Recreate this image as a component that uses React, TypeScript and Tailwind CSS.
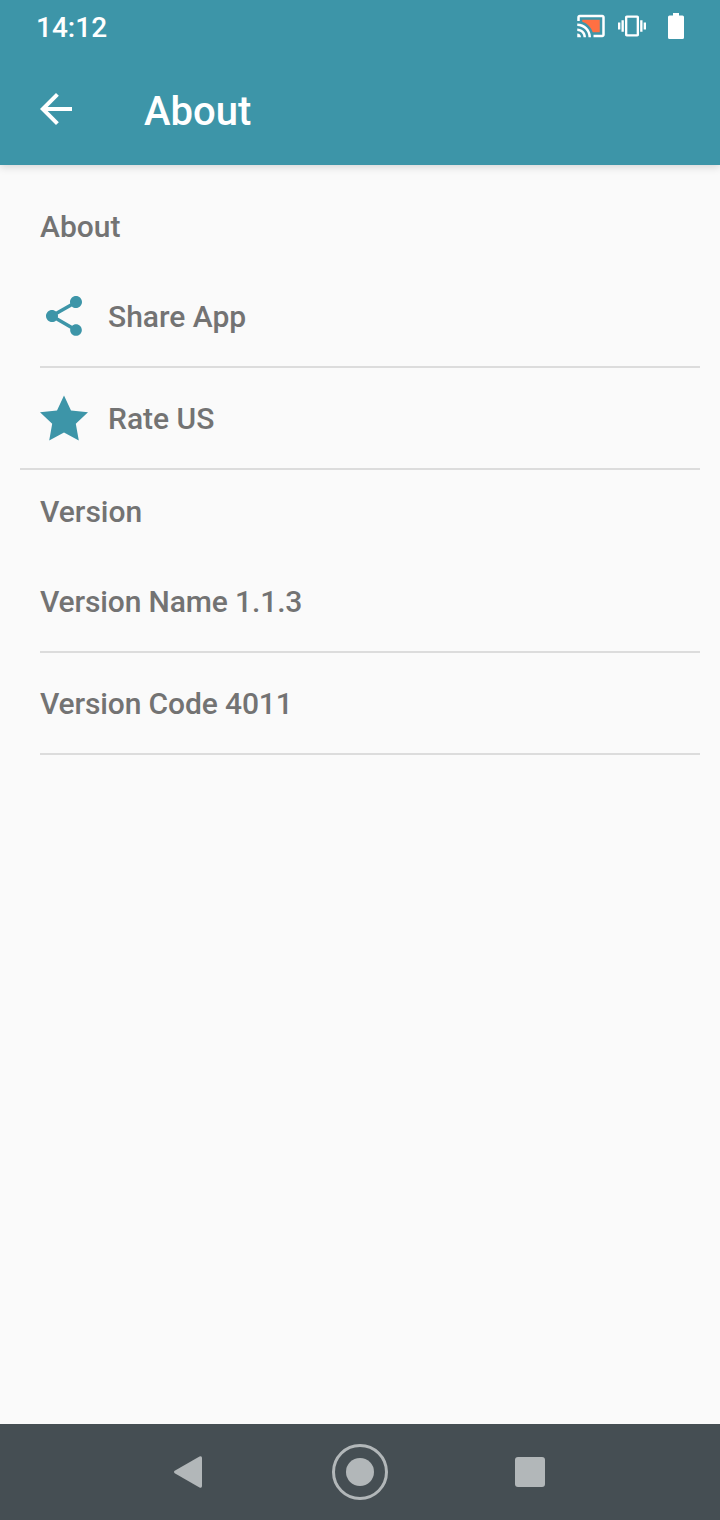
import { ReactNode } from "react"

function StatusBar() {
  return (
    <div className="flex h-[53px] items-center justify-between pl-9 pr-9 text-white">
      <span className="text-[28px] font-medium leading-none mt-[2px]">14:12</span>
      <div className="mb-[2px] flex items-center">
        <svg className="mr-3 h-[30px] w-[30px]" viewBox="0 0 24 24">
          <path fill="#ff7043" d="M19 7H5v1.63c3.96 1.28 7.09 4.41 8.37 8.37H19V7z" />
          <path
            fill="currentColor"
            d="M1 18v3h3c0-1.66-1.34-3-3-3zm0-4v2c2.76 0 5 2.24 5 5h2c0-3.87-3.13-7-7-7zm0-4v2c4.97 0 9 4.03 9 9h2c0-6.08-4.93-11-11-11zm20-7H3c-1.1 0-2 .9-2 2v3h2V5h18v14h-7v2h7c1.1 0 2-.9 2-2V5c0-1.1-.9-2-2-2z"
          />
        </svg>
        <svg className="mr-[22px] h-7 w-7" viewBox="0 0 24 24" fill="currentColor">
          <path d="M0 15h2V9H0v6zm3 2h2V7H3v10zm19-8v6h2V9h-2zm-3 8h2V7h-2v10zM16.5 3h-9C6.67 3 6 3.67 6 4.5v15c0 .83.67 1.5 1.5 1.5h9c.83 0 1.5-.67 1.5-1.5v-15c0-.83-.67-1.5-1.5-1.5zM16 19H8V5h8v14z" />
        </svg>
        <svg className="h-[26px] w-4" viewBox="0 0 16 26" fill="currentColor">
          <path d="M5 0h6v2.5h3.5A1.5 1.5 0 0 1 16 4v20.5a1.5 1.5 0 0 1-1.5 1.5h-13A1.5 1.5 0 0 1 0 24.500V4a1.5 1.5 0 0 1 1.5-1.500H5z" />
        </svg>
      </div>
    </div>
  )
}

function ShareIcon() {
  return (
    <svg className="h-12 w-12" viewBox="0 0 24 24" fill="#3d95a8">
      <path d="M18 16.080c-.76 0-1.440.3-1.960.77L8.910 12.700c.05-.23.09-.46.09-.7s-.04-.47-.09-.7l7.050-4.110c.54.5 1.250.81 2.040.81 1.660 0 3-1.340 3-3s-1.340-3-3-3-3 1.340-3 3c0 .24.04.47.09.7L8.040 9.810C7.500 9.310 6.790 9 6 9c-1.660 0-3 1.340-3 3s1.340 3 3 3c.79 0 1.500-.31 2.040-.81l7.120 4.160c-.05.21-.08.43-.08.65 0 1.610 1.310 2.920 2.920 2.920s2.920-1.310 2.920-2.920-1.310-2.920-2.920-2.920z" />
    </svg>
  )
}

function StarIcon() {
  return (
    <svg className="h-12 w-12" viewBox="0 0 48 48" fill="#3d95a8">
      <path d="M24 1.500L31 16.500L48 18.200L35.800 29.700L38.800 46.500L24 38.500L9.200 46.500L12.200 29.700L0 18.200L17 16.500Z" />
    </svg>
  )
}

function SectionTitle({ children }: { children: ReactNode }) {
  return <h2 className="flex h-[81px] items-center pl-10 pt-[2px]">{children}</h2>
}

function Row({ icon, label, wide }: { icon?: ReactNode; label: string; wide?: boolean }) {
  return (
    <div>
      <div className="flex h-[100px] items-center gap-5 pl-10">
        {icon}
        <span className={icon ? "pt-[2px]" : "pt-[2px] tracking-[-0.13px]"}>{label}</span>
      </div>
      <div className={wide ? "ml-5 mr-5 h-[2px] bg-[#dcdcdc]" : "ml-10 mr-5 h-[2px] bg-[#dcdcdc]"} />
    </div>
  )
}

export default function App() {
  return (
    <div className="flex h-[1520px] w-[720px] flex-col bg-[#fafafa] font-['Roboto',sans-serif]">
      <header className="h-[165px] bg-[#3d95a8] shadow-[0_2px_8px_rgba(0,0,0,0.15)]">
        <StatusBar />
        <div className="flex h-28 items-center pl-8 text-white">
          <svg className="h-12 w-12" viewBox="0 0 24 24" fill="currentColor">
            <path d="M20 11H7.830l5.590-5.590L12 4l-8 8 8 8 1.410-1.410L7.830 13H20v-2z" />
          </svg>
          <h1 className="ml-16 mt-[6px] text-[40px] font-medium leading-none">About</h1>
        </div>
      </header>

      <main className="flex-1 pt-5 text-[30px] font-medium leading-9 text-[#737373]">
        <SectionTitle>About</SectionTitle>
        <Row icon={<ShareIcon />} label="Share App" />
        <Row icon={<StarIcon />} label="Rate US" wide />
        <SectionTitle>Version</SectionTitle>
        <Row label="Version Name 1.1.3" />
        <Row label="Version Code 4011" />
      </main>

      <nav className="flex h-24 items-center bg-[#454e53] pl-[174px]">
        <svg className="h-8 w-7" viewBox="0 0 28 32" fill="#b2b7b9">
          <path d="M0.700 14.800L25.500 0.500Q28 -0.500 28 2V30Q28 32.500 25.500 31.500L0.700 17.200Q-0.700 16 0.700 14.800Z" />
        </svg>
        <div className="ml-[130px] flex h-14 w-14 items-center justify-center rounded-full border-[3px] border-[#b2b7b9]">
          <div className="h-7 w-7 rounded-full bg-[#b2b7b9]" />
        </div>
        <div className="ml-[127px] h-[30px] w-[30px] rounded-[3px] bg-[#b2b7b9]" />
      </nav>
    </div>
  )
}
